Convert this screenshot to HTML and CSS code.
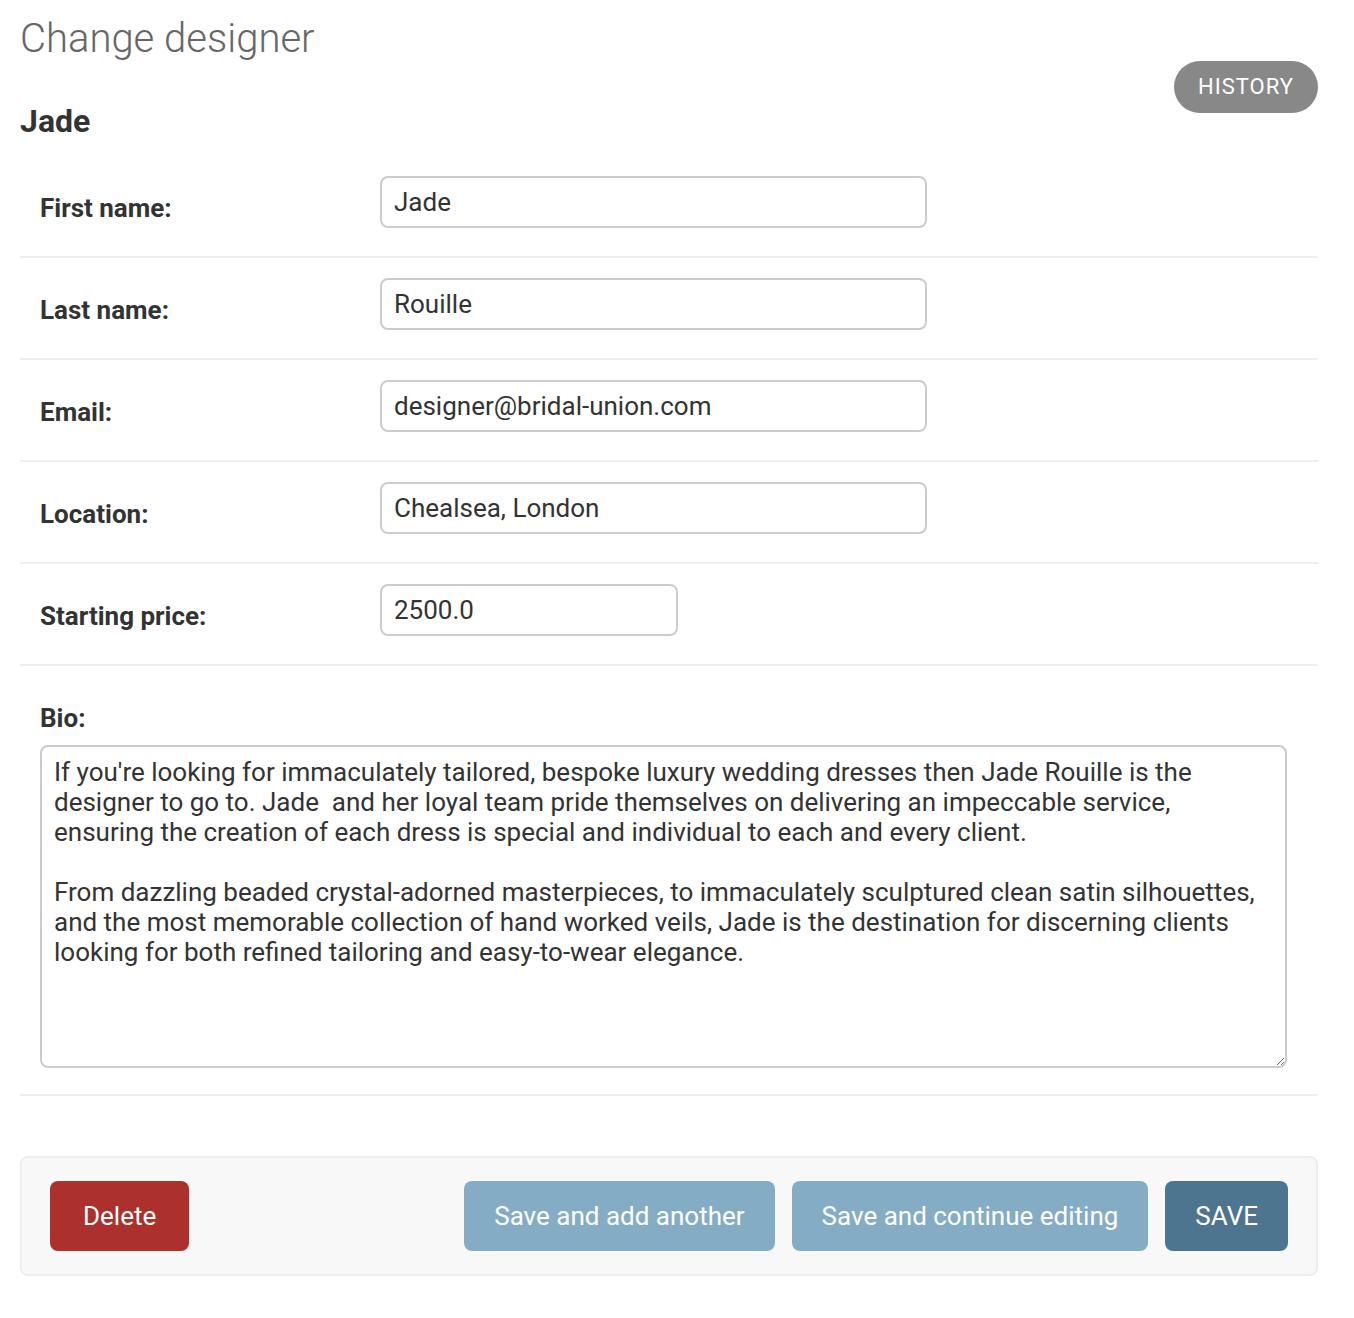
FILE: index.html
```html
<!DOCTYPE html>
<html lang="en">
<head>
<meta charset="utf-8">
<title>Change designer</title>
<link rel="stylesheet" href="styles.css">
</head>
<body>
<div class="content">
  <div class="header">
    <div class="titles">
      <h1 class="title">Change designer</h1>
      <h2 class="subtitle">Jade</h2>
    </div>
    <a class="history" href="#">History</a>
  </div>
  <form class="change-form">
    <div class="form-row">
      <label class="field-label" for="id_first_name">First name:</label>
      <input class="text-input wide" id="id_first_name" type="text" value="Jade">
    </div>
    <div class="form-row">
      <label class="field-label" for="id_last_name">Last name:</label>
      <input class="text-input wide" id="id_last_name" type="text" value="Rouille">
    </div>
    <div class="form-row">
      <label class="field-label" for="id_email">Email:</label>
      <input class="text-input wide" id="id_email" type="text" value="designer@bridal-union.com">
    </div>
    <div class="form-row">
      <label class="field-label" for="id_location">Location:</label>
      <input class="text-input wide" id="id_location" type="text" value="Chealsea, London">
    </div>
    <div class="form-row">
      <label class="field-label" for="id_starting_price">Starting price:</label>
      <input class="text-input narrow" id="id_starting_price" type="text" value="2500.0">
    </div>
    <div class="form-row stacked">
      <label class="field-label" for="id_bio">Bio:</label>
      <textarea class="bio-input" id="id_bio">If you're looking for immaculately tailored, bespoke luxury wedding dresses then Jade Rouille is the designer to go to. Jade  and her loyal team pride themselves on delivering an impeccable service, ensuring the creation of each dress is special and individual to each and every client.

From dazzling beaded crystal-adorned masterpieces, to immaculately sculptured clean satin silhouettes, and the most memorable collection of hand worked veils, Jade is the destination for discerning clients looking for both refined tailoring and easy-to-wear elegance.</textarea>
    </div>
    <div class="submit-row">
      <a class="btn btn-delete" href="#">Delete</a>
      <div class="submit-actions">
        <button class="btn btn-light" type="button">Save and add another</button>
        <button class="btn btn-light" type="button">Save and continue editing</button>
        <button class="btn btn-save" type="button">SAVE</button>
      </div>
    </div>
  </form>
</div>
</body>
</html>
```
FILE: styles.css
```css
html, body {
  margin: 0;
  padding: 0;
  background: #fff;
}

body {
  font-family: Roboto, "Liberation Sans", Arial, sans-serif;
  color: #333;
}

.content {
  padding: 15px 36px 40px 20px;
}

.header {
  display: flex;
  justify-content: space-between;
  align-items: flex-start;
}

.title {
  margin: 0 0 40px;
  font-size: 40px;
  line-height: 47px;
  font-weight: 300;
  color: #666;
}

.subtitle {
  margin: 0 0 16px;
  font-size: 32px;
  line-height: 38px;
  font-weight: 700;
  color: #333;
}

.history {
  margin-top: 46px;
  display: block;
  padding: 6px 24px;
  line-height: 40px;
  font-size: 22px;
  letter-spacing: 1px;
  text-transform: uppercase;
  color: #fff;
  background: #888;
  border-radius: 30px;
  text-decoration: none;
}

.change-form {
  margin: 0;
}

.form-row {
  display: flex;
  align-items: flex-start;
  padding: 20px;
  min-height: 60px;
  border-bottom: 2px solid #eee;
}

.form-row.stacked {
  flex-direction: column;
  min-height: 0;
}

.field-label {
  display: block;
  width: 340px;
  flex: none;
  padding-top: 6px;
  line-height: 52px;
  font-size: 26px;
  font-weight: 700;
  color: #333;
}

.stacked .field-label {
  padding-top: 6px;
  width: auto;
}

.text-input {
  box-sizing: border-box;
  height: 52px;
  margin: 0;
  padding: 0 12px;
  border: 2px solid #ccc;
  border-radius: 8px;
  font-family: Roboto, "Liberation Sans", Arial, sans-serif;
  font-size: 26px;
  color: #333;
  background: #fff;
  outline: none;
}

.text-input.wide {
  width: 547px;
}

.text-input.narrow {
  width: 298px;
}

.bio-input {
  box-sizing: border-box;
  display: block;
  width: 1247px;
  height: 323px;
  margin: 1px 0 6px;
  padding: 10px 12px;
  border: 2px solid #ccc;
  border-radius: 8px;
  font-family: Roboto, "Liberation Sans", Arial, sans-serif;
  font-size: 26px;
  line-height: 30px;
  color: #333;
  background: #fff;
  outline: none;
}

.submit-row {
  margin-top: 60px;
  display: flex;
  justify-content: space-between;
  align-items: center;
  padding: 23px 28px;
  background: #f8f8f8;
  border: 2px solid #eee;
  border-radius: 8px;
}

.submit-actions {
  display: flex;
  gap: 17px;
}

.btn {
  box-sizing: border-box;
  display: block;
  height: 70px;
  margin: 0;
  padding: 0 30px;
  border: none;
  border-radius: 8px;
  font-family: Roboto, "Liberation Sans", Arial, sans-serif;
  font-size: 26px;
  line-height: 70px;
  color: #fff;
  text-decoration: none;
  cursor: pointer;
}

.btn-delete {
  padding: 0 33px;
  background: #ac302b;
}

.btn-light {
  background: #84adc5;
}

.btn-save {
  background: #4e758f;
}
```
